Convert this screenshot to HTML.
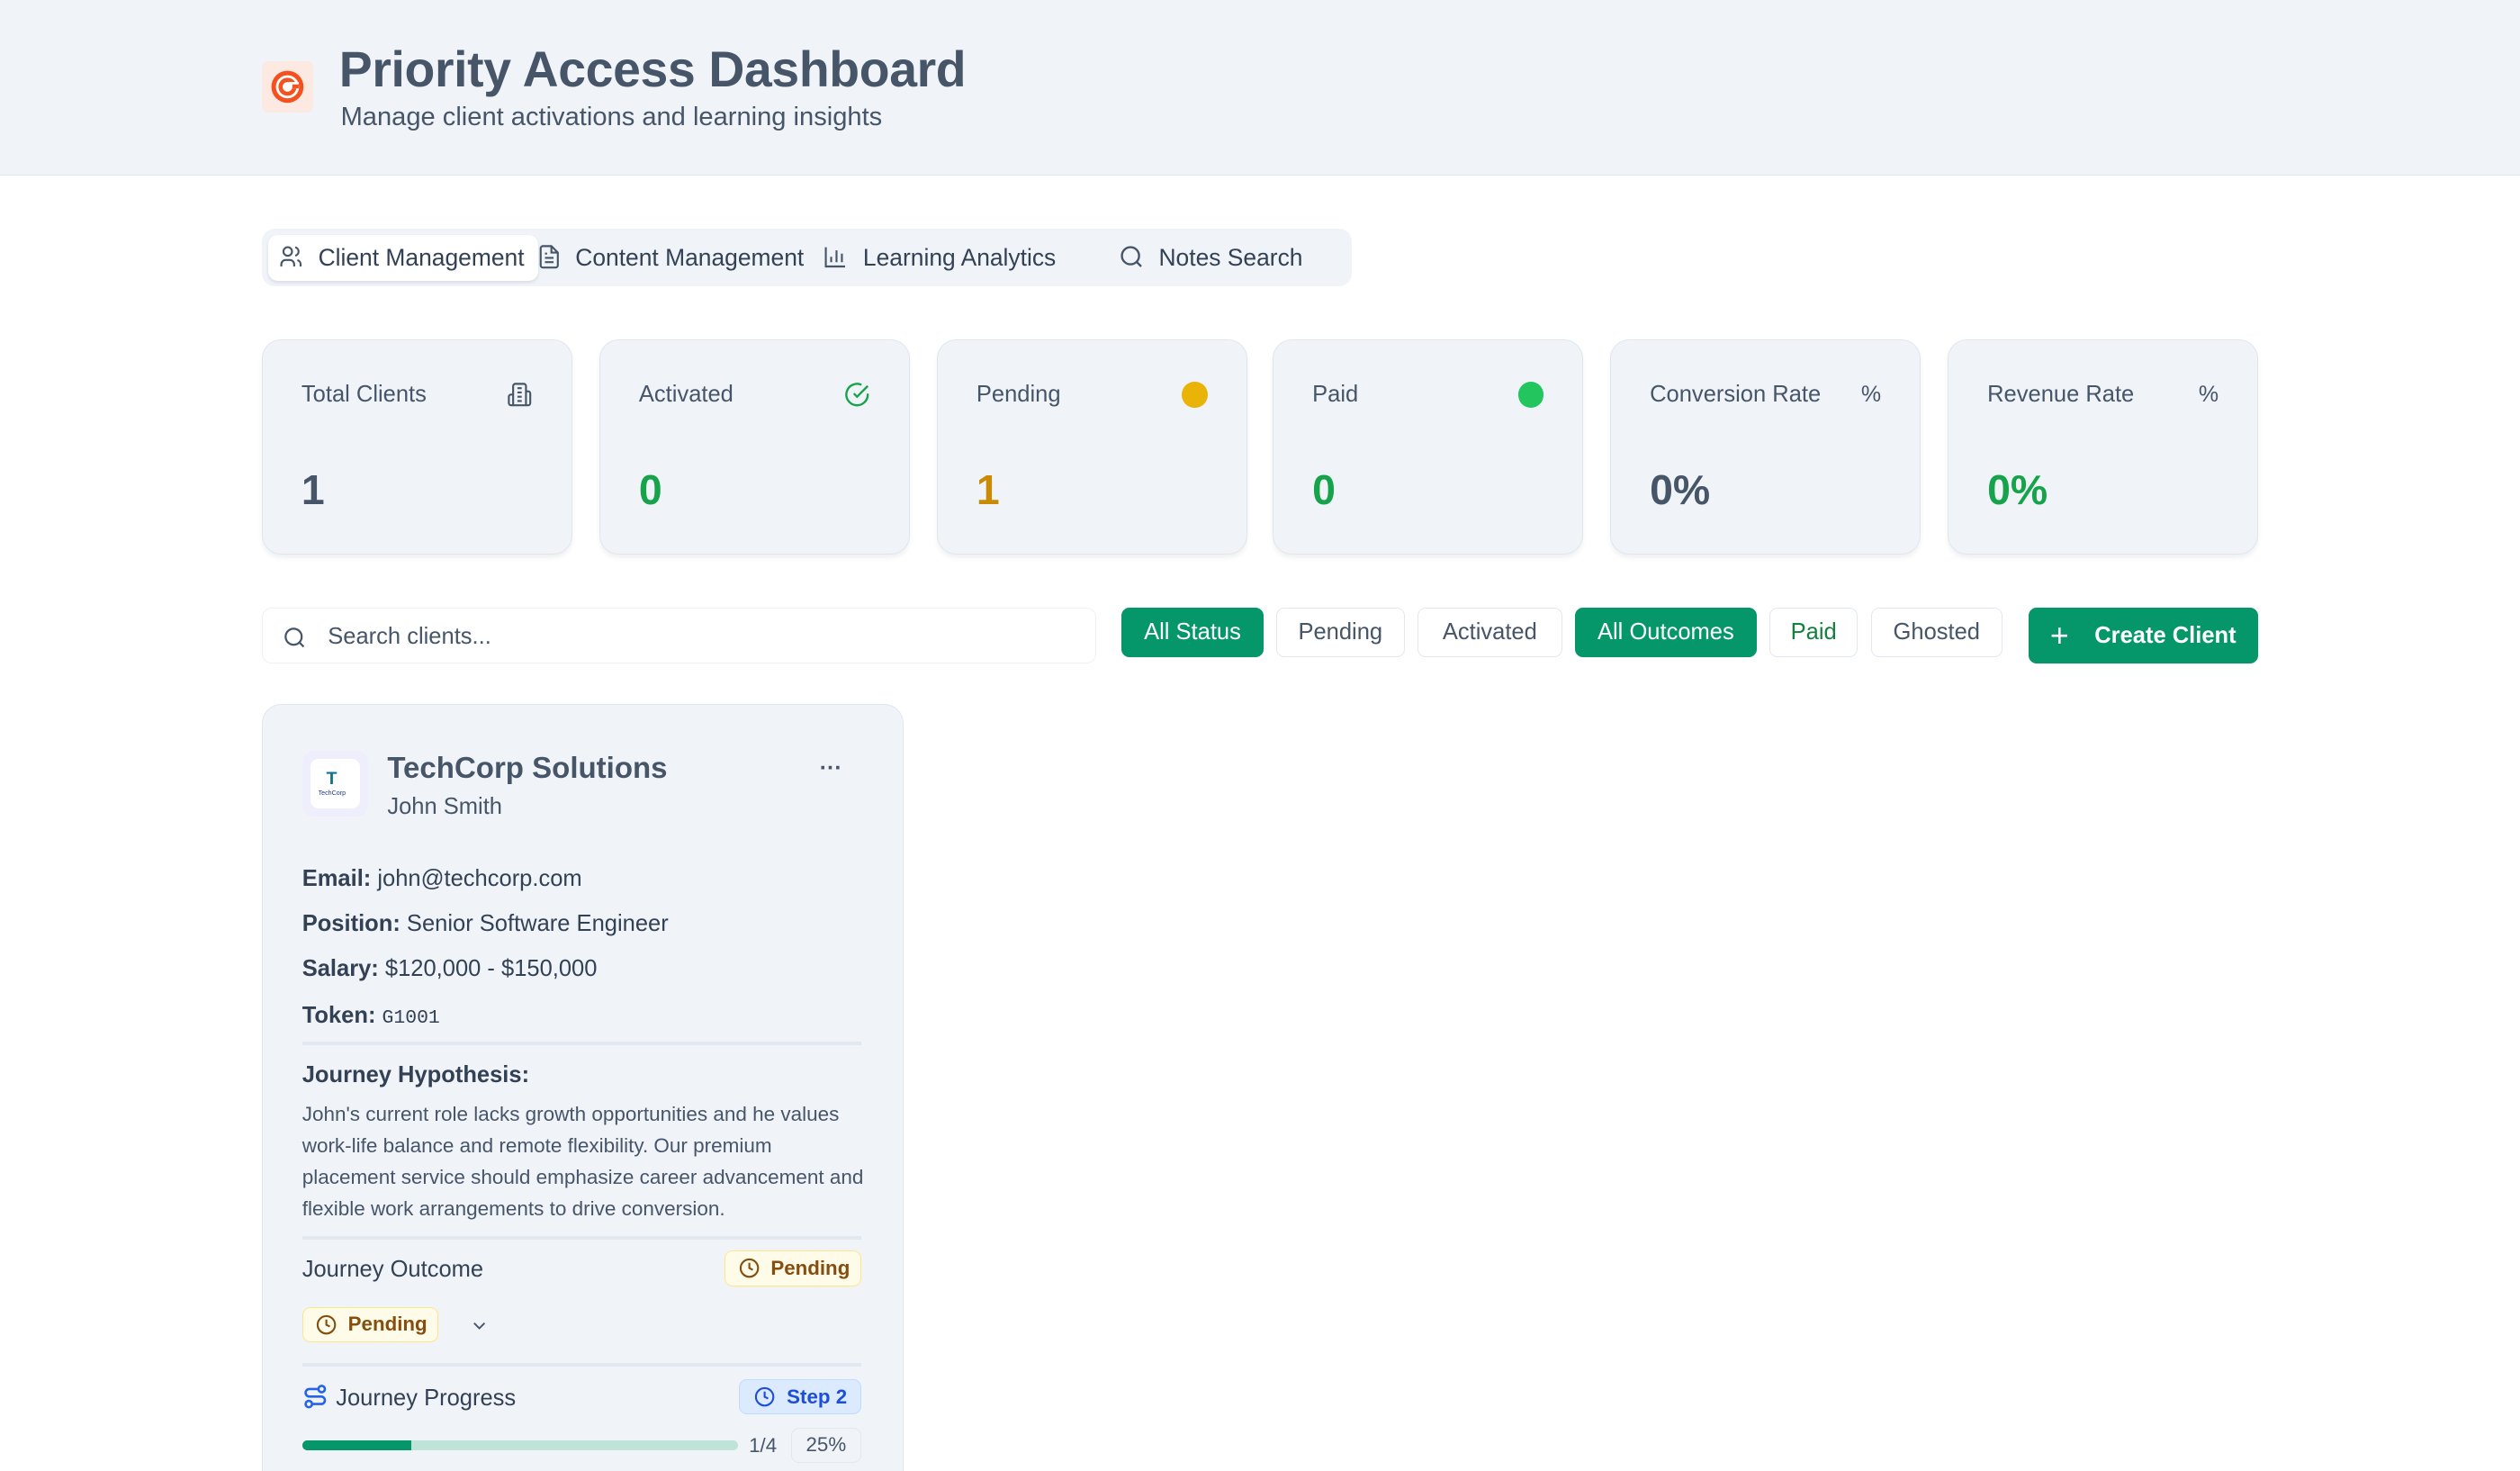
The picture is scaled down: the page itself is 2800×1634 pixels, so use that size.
<!DOCTYPE html>
<html><head><meta charset="utf-8"><style>
*{margin:0;padding:0;box-sizing:border-box}
html,body{width:2800px;height:1634px;overflow:hidden;background:#fff}
#z{zoom:1.785714;position:relative;width:1568px;height:915px;font-family:"Liberation Sans",sans-serif;color:#475569}
.a{position:absolute;white-space:nowrap}
.hdr{left:0;top:0;width:1568px;height:109px;background:#f0f4f9;border-bottom:1px solid #dfe5ec}
.card{position:absolute;top:211px;width:193px;height:134px;background:#f0f4f9;border:1px solid #e0e6ee;border-radius:12px;box-shadow:0 2px 3px rgba(0,0,0,.06)}
.card .l{position:absolute;left:24px;top:26px;font-size:14.3px;color:#475569}
.card .v{position:absolute;left:24px;top:78px;font-size:26px;font-weight:700}
.card .i{position:absolute;right:24px;top:26px}
.btn{position:absolute;top:378px;height:31px;border:1px solid #e2e8f0;border-radius:5px;background:#fff;font-size:14.3px;color:#475569;display:flex;align-items:center;justify-content:center}
.g{background:#059669;color:#fff;border-color:#059669;font-weight:500}
.t{font-size:14.3px;color:#334155}
.t b{font-weight:700}
.hr{position:absolute;left:188px;width:348px;height:2px;background:#e2e8f0}
.badge{position:absolute;height:22px;border:1px solid #fde68a;background:#fefce8;border-radius:5px;color:#854d0e;font-size:12.5px;font-weight:600;display:flex;align-items:center;gap:7px;padding-left:8px}
</style></head><body><div id="z">
<div class="a hdr"></div>
<div class="a" style="left:163px;top:38px;width:32px;height:32px;background:#fbe9e2;border-radius:4px"></div>
<svg class="a" style="left:167px;top:42px" width="24" height="24" viewBox="0 0 24 24"><circle cx="12" cy="12" r="10" fill="#f4511e"/><circle cx="12" cy="12" r="7.2" fill="#fff"/><circle cx="12" cy="12" r="5.6" fill="#f4511e"/><circle cx="12" cy="12" r="3" fill="#fff"/><rect x="13" y="9" width="6" height="4" fill="#fff"/><rect x="15" y="10.5" width="4" height="2.5" fill="#f4511e"/></svg>
<div class="a" style="left:211px;top:25px;font-size:31px;font-weight:700;color:#475569;letter-spacing:-.2px">Priority Access Dashboard</div>
<div class="a" style="left:212px;top:64px;font-size:16.3px;color:#475569">Manage client activations and learning insights</div>

<div class="a" style="left:163px;top:142px;width:678px;height:36px;background:#f0f4f9;border-radius:8px"></div>
<div class="a" style="left:167px;top:146px;width:168px;height:29px;background:#fff;border-radius:6px;box-shadow:0 1px 2px rgba(0,0,0,.1)"></div>
<svg class="a" style="left:173px;top:152px" width="16" height="16" viewBox="0 0 24 24" fill="none" stroke="#475569" stroke-width="1.8"><circle cx="9" cy="7" r="4"/><path d="M3 21v-2a4 4 0 0 1 4-4h4a4 4 0 0 1 4 4v2M16 3.1a4 4 0 0 1 0 7.8M21 21v-2a4 4 0 0 0-3-3.9"/></svg>
<div class="a t" style="left:198px;top:152px;font-size:14.8px">Client Management</div>
<svg class="a" style="left:334px;top:152px" width="16" height="16" viewBox="0 0 24 24" fill="none" stroke="#475569" stroke-width="1.8"><path d="M14 2H6a2 2 0 0 0-2 2v16a2 2 0 0 0 2 2h12a2 2 0 0 0 2-2V8z"/><path d="M14 2v6h6M8 13h8M8 17h8M8 9h2"/></svg>
<div class="a t" style="left:358px;top:152px;font-size:14.8px">Content Management</div>
<svg class="a" style="left:512px;top:152px" width="16" height="16" viewBox="0 0 24 24" fill="none" stroke="#475569" stroke-width="1.8"><path d="M3 3v18h18M8 17v-5M13 17V6M18 17v-8"/></svg>
<div class="a t" style="left:537px;top:152px;font-size:14.8px">Learning Analytics</div>
<svg class="a" style="left:696px;top:152px" width="16" height="16" viewBox="0 0 24 24" fill="none" stroke="#475569" stroke-width="2"><circle cx="11" cy="11" r="8"/><path d="M21 21l-4.3-4.3"/></svg>
<div class="a t" style="left:721px;top:152px;font-size:14.8px">Notes Search</div>

<div class="card" style="left:163px"><div class="l">Total Clients</div><svg class="i" width="16" height="16" viewBox="0 0 24 24" fill="none" stroke="#475569" stroke-width="1.8"><path d="M6 22V4a2 2 0 0 1 2-2h8a2 2 0 0 1 2 2v18zM6 12H4a2 2 0 0 0-2 2v6a2 2 0 0 0 2 2h2M18 9h2a2 2 0 0 1 2 2v9a2 2 0 0 1-2 2h-2M10 6h4M10 10h4M10 14h4M10 18h4"/></svg><div class="v" style="color:#475569">1</div></div>
<div class="card" style="left:373px"><div class="l">Activated</div><svg class="i" width="16" height="16" viewBox="0 0 24 24" fill="none" stroke="#16a34a" stroke-width="2"><path d="M22 11.1V12a10 10 0 1 1-5.9-9.1"/><path d="M22 4L12 14l-3-3"/></svg><div class="v" style="color:#16a34a">0</div></div>
<div class="card" style="left:583px"><div class="l">Pending</div><div class="i" style="width:16px;height:16px;border-radius:50%;background:#eab308"></div><div class="v" style="color:#ca8a04">1</div></div>
<div class="card" style="left:792px"><div class="l">Paid</div><div class="i" style="width:16px;height:16px;border-radius:50%;background:#22c55e"></div><div class="v" style="color:#16a34a">0</div></div>
<div class="card" style="left:1002px"><div class="l">Conversion Rate</div><div class="i" style="font-size:14px;top:26px">%</div><div class="v" style="color:#475569">0%</div></div>
<div class="card" style="left:1212px"><div class="l">Revenue Rate</div><div class="i" style="font-size:14px;top:26px">%</div><div class="v" style="color:#16a34a">0%</div></div>

<div class="a" style="left:163px;top:378px;width:519px;height:35px;border:1px solid #eef1f5;border-radius:6px;background:#fff"></div>
<svg class="a" style="left:176px;top:389px" width="15" height="15" viewBox="0 0 24 24" fill="none" stroke="#475569" stroke-width="2"><circle cx="11" cy="11" r="8"/><path d="M21 21l-4.3-4.3"/></svg>
<div class="a" style="left:204px;top:388px;font-size:14.3px;color:#475569">Search clients...</div>
<div class="btn g" style="left:698px;width:88px">All Status</div>
<div class="btn" style="left:794px;width:80px">Pending</div>
<div class="btn" style="left:882px;width:90px">Activated</div>
<div class="btn g" style="left:980px;width:113px">All Outcomes</div>
<div class="btn" style="left:1101px;width:55px;color:#15803d">Paid</div>
<div class="btn" style="left:1164px;width:82px">Ghosted</div>
<div class="btn g" style="left:1262px;width:143px;height:35px;font-size:14.3px;gap:16px;font-weight:600"><span style="font-size:20px;font-weight:300">+</span>Create Client</div>

<div class="a" style="left:163px;top:438px;width:399px;height:500px;background:#f0f4f9;border:1px solid #e0e6ee;border-radius:12px"></div>
<div class="a" style="left:188px;top:467px;width:41px;height:41px;background:#ede9fe;border-radius:7px;opacity:.6"></div>
<div class="a" style="left:193px;top:472px;width:31px;height:31px;background:#fff;border-radius:5px"></div>
<div class="a" style="left:203px;top:478px;font-size:11px;font-weight:900;color:#0e7490">T</div>
<div class="a" style="left:198px;top:491px;font-size:4px;color:#1e3a8a">TechCorp</div>
<div class="a" style="left:241px;top:467px;font-size:18.5px;font-weight:700;color:#475569">TechCorp Solutions</div>
<div class="a" style="left:241px;top:494px;font-size:14.3px;color:#475569">John Smith</div>
<div class="a" style="left:510px;top:470px;font-size:14px;font-weight:700;color:#475569">···</div>
<div class="a t" style="left:188px;top:539px"><b>Email:</b> john@techcorp.com</div>
<div class="a t" style="left:188px;top:567px"><b>Position:</b> Senior Software Engineer</div>
<div class="a t" style="left:188px;top:595px"><b>Salary:</b> $120,000 - $150,000</div>
<div class="a t" style="left:188px;top:624px"><b>Token:</b> <span style="font-family:'Liberation Mono',monospace;font-size:12px">G1001</span></div>
<div class="hr" style="top:648px"></div>
<div class="a t" style="left:188px;top:661px;font-weight:700">Journey Hypothesis:</div>
<div class="a" style="left:188px;top:683px;font-size:12.6px;line-height:19.6px;color:#475569;white-space:normal;width:352px">John's current role lacks growth opportunities and he values work-life balance and remote flexibility. Our premium placement service should emphasize career advancement and flexible work arrangements to drive conversion.</div>
<div class="hr" style="top:769px"></div>
<div class="a t" style="left:188px;top:782px">Journey Outcome</div>
<div class="badge" style="left:451px;top:778px;width:85px"><svg width="13" height="13" viewBox="0 0 24 24" fill="none" stroke="#854d0e" stroke-width="2.2"><circle cx="12" cy="12" r="10"/><path d="M12 6v6l4 2"/></svg>Pending</div>
<div class="badge" style="left:188px;top:813px;width:85px"><svg width="13" height="13" viewBox="0 0 24 24" fill="none" stroke="#854d0e" stroke-width="2.2"><circle cx="12" cy="12" r="10"/><path d="M12 6v6l4 2"/></svg>Pending</div>
<svg class="a" style="left:292px;top:818px" width="13" height="13" viewBox="0 0 24 24" fill="none" stroke="#475569" stroke-width="2"><path d="M6 9l6 6 6-6"/></svg>
<div class="hr" style="top:848px"></div>
<svg class="a" style="left:188px;top:861px" width="16" height="16" viewBox="0 0 24 24" fill="none" stroke="#2563eb" stroke-width="2.2"><circle cx="6" cy="19" r="3"/><circle cx="18" cy="5" r="3"/><path d="M9 19h8.5a3.5 3.5 0 0 0 0-7h-11a3.5 3.5 0 0 1 0-7H15"/></svg>
<div class="a t" style="left:209px;top:862px">Journey Progress</div>
<div class="a" style="left:460px;top:858px;width:76px;height:22px;background:#dbeafe;border:1px solid #bfdbfe;border-radius:5px;color:#1d4ed8;font-size:12.5px;font-weight:600;display:flex;align-items:center;gap:7px;padding-left:9px"><svg width="13" height="13" viewBox="0 0 24 24" fill="none" stroke="#1d4ed8" stroke-width="2.2"><circle cx="12" cy="12" r="10"/><path d="M12 6v6l4 2"/></svg>Step 2</div>
<div class="a" style="left:188px;top:896px;width:271px;height:6px;background:#c0e3d8;border-radius:3px"></div>
<div class="a" style="left:188px;top:896px;width:68px;height:6px;background:#059669;border-radius:3px 0 0 3px"></div>
<div class="a" style="left:466px;top:892px;font-size:12.5px;color:#475569">1/4</div>
<div class="a" style="left:492px;top:888px;width:44px;height:22px;border:1px solid #e2e8f0;border-radius:5px;font-size:12.5px;display:flex;align-items:center;justify-content:center">25%</div>
</div></body></html>
